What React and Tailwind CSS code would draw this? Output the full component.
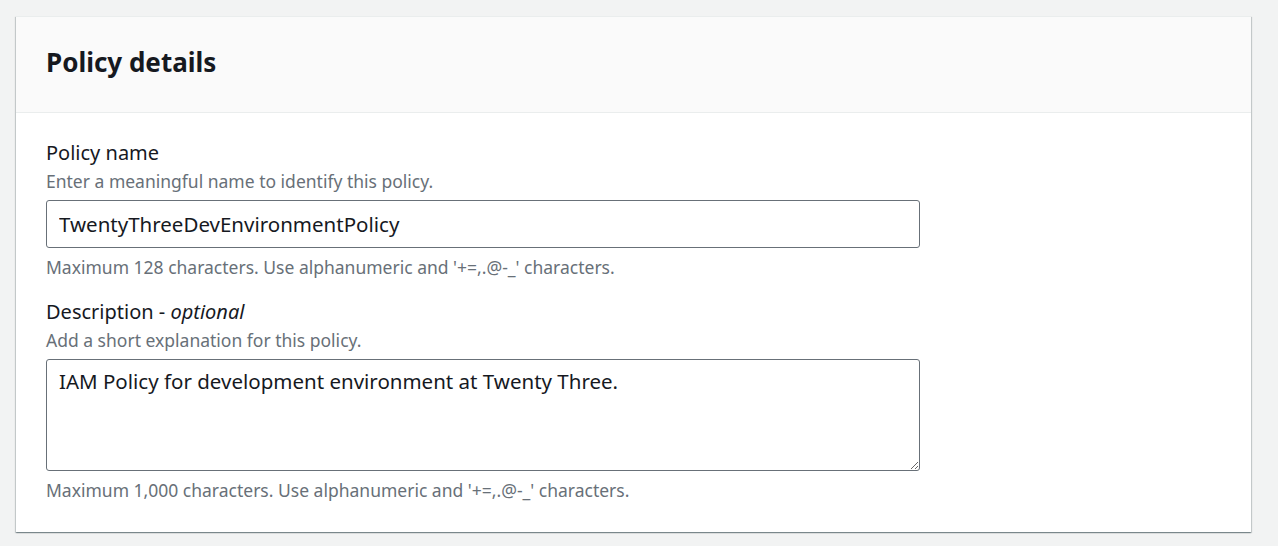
import React from 'react';

const font = { fontFamily: '"Noto Sans", "Open Sans", Arial, sans-serif' };

export default function App() {
  return (
    <div className="min-h-[546px] bg-[#f2f3f3] px-4 pt-4 pb-3" style={font}>
      <div className="w-[1235px] bg-white border-t border-[#eaeded] shadow-[0_1px_1px_0_rgba(0,28,36,0.3),1px_1px_1px_0_rgba(0,28,36,0.15),-1px_1px_1px_0_rgba(0,28,36,0.15)]">
        <div className="h-[96px] bg-[#fafafa] border-b border-[#eaeded] px-[30px] flex items-center">
          <h2 className="text-[26px] font-bold text-[#16191f] leading-none -mt-[6px]">Policy details</h2>
        </div>
        <div className="px-[30px] pt-[27px] pb-[30px]">
          <label className="block text-[20px] leading-[26px] text-[#16191f]">Policy name</label>
          <div className="text-[17.5px] leading-[24px] text-[#687078] mt-[3px]">Enter a meaningful name to identify this policy.</div>
          <input
            className="mt-[7px] w-[874px] h-[48px] border border-[#687078] rounded-[3px] px-[12px] text-[20.5px] text-[#16191f] outline-none"
            defaultValue="TwentyThreeDevEnvironmentPolicy"
          />
          <div className="text-[17.5px] leading-[24px] text-[#687078] mt-[7px]">Maximum 128 characters. Use alphanumeric and '+=,.@-_' characters.</div>

          <label className="block text-[20px] leading-[26px] text-[#16191f] mt-[20px]">
            Description - <i>optional</i>
          </label>
          <div className="text-[17.5px] leading-[24px] text-[#687078] mt-[3px]">Add a short explanation for this policy.</div>
          <textarea
            className="block mt-[7px] w-[874px] h-[112px] border border-[#687078] rounded-[3px] px-[12px] py-[7px] text-[20.5px] leading-[28px] text-[#16191f] outline-none"
            defaultValue="IAM Policy for development environment at Twenty Three."
          />
          <div className="text-[17.5px] leading-[24px] text-[#687078] mt-[7px]">Maximum 1,000 characters. Use alphanumeric and '+=,.@-_' characters.</div>
        </div>
      </div>
    </div>
  );
}
